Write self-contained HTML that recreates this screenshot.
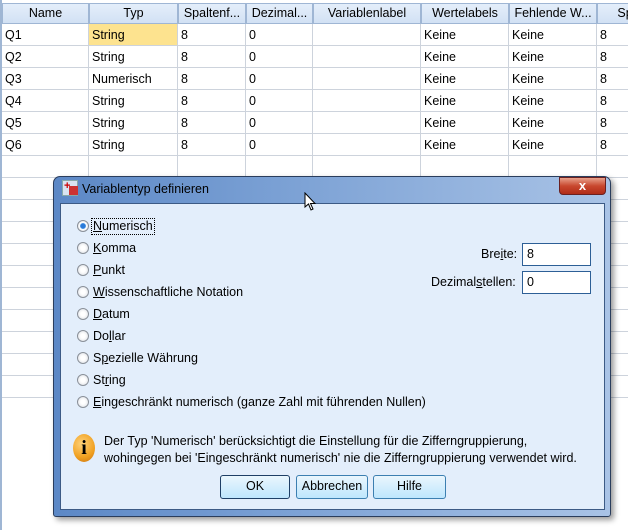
<!DOCTYPE html>
<html><head><meta charset="utf-8"><style>
*{margin:0;padding:0;box-sizing:border-box}
body{width:628px;height:530px;overflow:hidden;background:#fff;font-family:"Liberation Sans",sans-serif;font-size:12.5px;color:#000;position:relative}
.g{position:absolute;left:0;top:0;width:628px;height:530px;background:#fff}
.c{position:absolute;border-right:1px solid #cdd3dc;border-bottom:1px solid #cdd3dc;padding-left:3px;line-height:22px;white-space:nowrap;overflow:hidden}
.h{background:linear-gradient(#e4eefa,#d2e1f4);border:1px solid #9fb6d4;text-align:center;line-height:19px;padding:0}
.a{position:absolute;white-space:nowrap}
.r{position:absolute;left:77px;width:12px;height:12px;border-radius:50%;border:1px solid #8a9099;background:radial-gradient(circle,#fff 30%,#d8dce2 100%)}
.u{text-decoration:underline}
.in{position:absolute;background:#fff;border:1px solid #2d5f96;padding-left:4px;line-height:21px}
.b{position:absolute;top:475px;height:24px;border:1px solid #3c7fb1;border-radius:3px;background:linear-gradient(#eaf6fd,#bee6fd);text-align:center;line-height:21px}
</style></head><body>
<div class="g" id="g"></div>
<script>
var cols=[2,89,178,246,313,421,509,597,660];
var hd=["Name","Typ","Spaltenf...","Dezimal...","Variablenlabel","Wertelabels","Fehlende W...","Spa"];
var rows=[["Q1","String","8","0","","Keine","Keine","8"],["Q2","String","8","0","","Keine","Keine","8"],["Q3","Numerisch","8","0","","Keine","Keine","8"],["Q4","String","8","0","","Keine","Keine","8"],["Q5","String","8","0","","Keine","Keine","8"],["Q6","String","8","0","","Keine","Keine","8"]];
var h="";
for(var i=0;i<8;i++){h+='<div class="c h" style="left:'+cols[i]+'px;top:3px;width:'+(cols[i+1]-cols[i])+'px;height:21px">'+hd[i]+'</div>';}
for(var r=0;r<17;r++){for(var i=0;i<8;i++){var t=r<6?rows[r][i]:"";var bg=(r==0&&i==1)?"background:#fde38f;":"";h+='<div class="c" style="'+bg+'left:'+cols[i]+'px;top:'+(24+r*22)+'px;width:'+(cols[i+1]-cols[i])+'px;height:22px">'+t+'</div>';}}
document.getElementById("g").innerHTML=h;
</script>
<div style="position:absolute;left:0;top:0;width:2px;height:530px;background:#9fb6d4"></div>
<div style="position:absolute;left:53px;top:176px;width:558px;height:341px;border:1px solid #2a3d5c;border-radius:7px 7px 3px 3px;background:linear-gradient(90deg,#5c88c6 0%,#7aa0d4 40%,#a9c3e6 100%);box-shadow:3px 3px 6px rgba(0,0,0,.4)"></div>
<div class="a" style="left:62px;top:180px;width:16px;height:16px;background:#d9e4f2;border:1px solid #8aa"><div style="position:absolute;left:6px;top:5px;width:9px;height:9px;background:#c33"></div><div style="position:absolute;left:1px;top:0;color:#c00;font-weight:bold;font-size:11px;line-height:10px">+</div></div>
<div class="a" style="left:82px;top:182px">Variablentyp definieren</div>
<div class="a" style="left:559px;top:177px;width:47px;height:18px;border:1px solid #6a2020;border-radius:0 0 4px 4px;background:linear-gradient(#e8a08a,#c8472e 50%,#b02c18);color:#fff;text-align:center;font-weight:bold;font-size:13px;line-height:16px">x</div>
<div style="position:absolute;left:60px;top:203px;width:545px;height:307px;background:#e3eefb;border:1px solid #3c5a85"></div>
<div class="r" style="top:220px;background:radial-gradient(circle,#2a7ad8 30%,#6fb0f0 40%,#fff 45%,#d8dce2 100%)"></div>
<div class="a" style="left:91px;top:218px;border:1px dotted #000;padding:0 1px;line-height:15px"><span class="u">N</span>umerisch</div>
<div class="r" style="top:242px"></div><div class="a" style="left:93px;top:241px"><span class="u">K</span>omma</div>
<div class="r" style="top:264px"></div><div class="a" style="left:93px;top:263px"><span class="u">P</span>unkt</div>
<div class="r" style="top:286px"></div><div class="a" style="left:93px;top:285px"><span class="u">W</span>issenschaftliche Notation</div>
<div class="r" style="top:308px"></div><div class="a" style="left:93px;top:307px"><span class="u">D</span>atum</div>
<div class="r" style="top:330px"></div><div class="a" style="left:93px;top:329px">Do<span class="u">l</span>lar</div>
<div class="r" style="top:352px"></div><div class="a" style="left:93px;top:351px">S<span class="u">p</span>ezielle Währung</div>
<div class="r" style="top:374px"></div><div class="a" style="left:93px;top:373px">St<span class="u">r</span>ing</div>
<div class="r" style="top:396px"></div><div class="a" style="left:93px;top:395px"><span class="u">E</span>ingeschränkt numerisch (ganze Zahl mit führenden Nullen)</div>
<div class="a" style="left:481px;top:247px">Bre<span class="u">i</span>te:</div>
<div class="in" style="left:522px;top:243px;width:69px;height:23px">8</div>
<div class="a" style="left:431px;top:275px">Dezimal<span class="u">s</span>tellen:</div>
<div class="in" style="left:522px;top:271px;width:69px;height:23px">0</div>
<div class="a" style="left:73px;top:434px;width:22px;height:28px;border-radius:50%;background:radial-gradient(circle at 40% 35%,#ffd27a,#f0a020 60%,#c87010);font-weight:bold;font-family:'Liberation Serif',serif;font-size:20px;text-align:center;line-height:28px">i</div>
<div class="a" style="left:104px;top:433px;line-height:17px">Der Typ 'Numerisch' berücksichtigt die Einstellung für die Zifferngruppierung,<br>wohingegen bei 'Eingeschränkt numerisch' nie die Zifferngruppierung verwendet wird.</div>
<div class="b" style="left:220px;width:70px;border-color:#1e3f66">OK</div>
<div class="b" style="left:296px;width:72px">Abbrechen</div>
<div class="b" style="left:373px;width:73px">Hilfe</div>
<svg style="position:absolute;left:304px;top:192px" width="14" height="20"><path d="M1 1 L1 15 L4.5 12 L7 18 L9 17 L6.5 11.5 L11 11.5 Z" fill="#fff" stroke="#000"/></svg>
</body></html>
